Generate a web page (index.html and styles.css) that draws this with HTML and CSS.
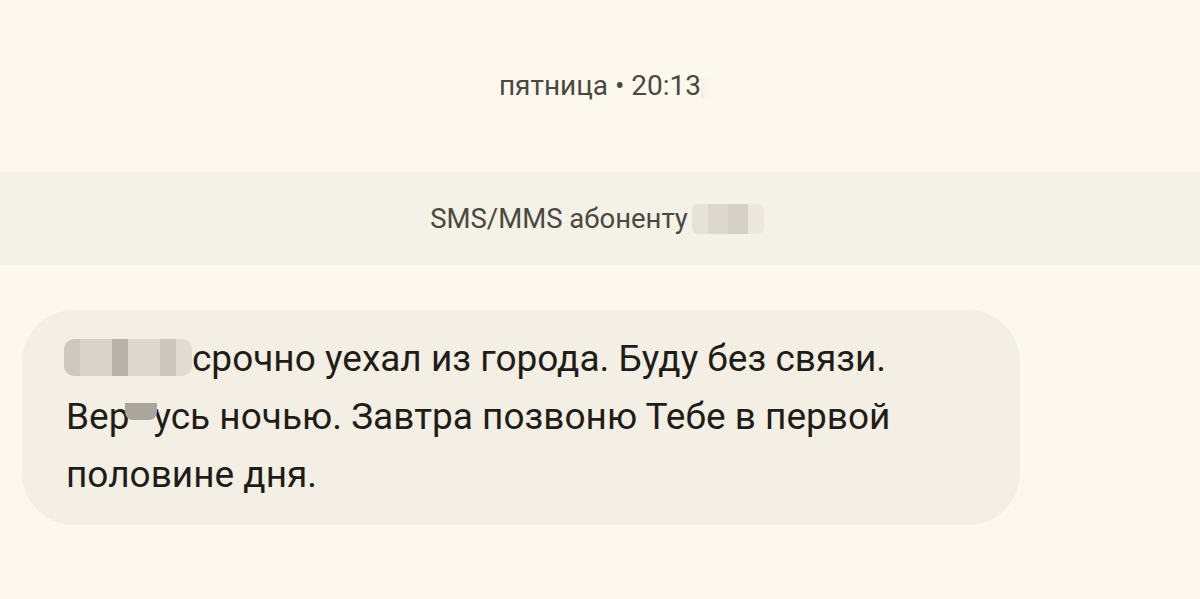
FILE: index.html
```html
<!DOCTYPE html>
<html lang="ru">
<head>
<meta charset="utf-8">
<link rel="stylesheet" href="styles.css">
</head>
<body>
<div class="screen">
  <div class="stamp">пятница • 20:13<span class="stamp-blur"></span></div>
  <div class="band"><span class="band-text">SMS/MMS абоненту<span class="mask mask-band"><i class="c1"></i><i class="c2"></i><i class="c3"></i><i class="c4"></i></span></span></div>
  <div class="thread">
    <div class="bubble">
      <p class="line"><span class="mask mask-name"><i class="n1"></i><i class="n2"></i><i class="n3"></i><i class="n4"></i><i class="n5"></i><i class="n6"></i></span>срочно уехал из города. Буду без связи.</p>
      <p class="line">Вер<span class="mask mask-small"></span>усь ночью. Завтра позвоню Тебе в первой</p>
      <p class="line">половине дня.</p>
    </div>
  </div>
</div>
</body>
</html>
```
FILE: styles.css
```css
html, body {
  margin: 0;
  padding: 0;
  background: #fcf8ee;
}
body {
  font-family: Roboto, "Noto Sans", sans-serif;
  color: #1f1d18;
  width: 1200px;
  height: 599px;
  overflow: hidden;
}
.screen {
  display: flex;
  flex-direction: column;
}
.stamp {
  margin-top: 69px;
  height: 34px;
  text-align: center;
  font-size: 28px;
  line-height: 34px;
  color: #4b4840;
  padding-left: 8px;
}
.stamp-blur {
  display: inline-block;
  width: 8px;
  height: 22px;
  vertical-align: middle;
  background: linear-gradient(90deg, #f3efe5, rgba(252,248,238,0));
}
.band {
  margin-top: 69px;
  height: 93px;
  background: #f4f1e7;
  display: flex;
  align-items: center;
  justify-content: center;
}
.band-text {
  font-size: 27.5px;
  color: #4b4840;
  display: inline-flex;
  align-items: center;
  margin-left: -6px;
}
.mask {
  display: inline-flex;
  vertical-align: middle;
}
.mask i {
  display: block;
}
.mask-band {
  width: 72px;
  height: 30px;
  margin-left: 4px;
  border-radius: 6px;
  overflow: hidden;
}
.mask-band .c1 { width: 16px; background: #e6e2d8; }
.mask-band .c2 { width: 20px; background: #dcd8ce; }
.mask-band .c3 { width: 20px; background: #d4d0c5; }
.mask-band .c4 { width: 16px; background: #ece8de; }
.thread {
  padding: 45px 180px 0 22px;
}
.bubble {
  background: #f4efe4;
  border-radius: 52px;
  padding: 20px 44px 21px 44px;
}
.line {
  margin: 0;
  font-size: 37px;
  line-height: 58px;
  color: #1f1d18;
  white-space: nowrap;
}
.mask-name {
  width: 128px;
  height: 37px;
  margin-right: 0;
  margin-left: -2px;
  border-radius: 10px;
  overflow: hidden;
  position: relative;
  top: -4px;
}
.mask-name .n1 { width: 16px; background: #cdc9bf; }
.mask-name .n2 { width: 32px; background: #d8d4ca; }
.mask-name .n3 { width: 16px; background: #b7b3a9; }
.mask-name .n4 { width: 32px; background: #dcd8ce; }
.mask-name .n5 { width: 16px; background: #cbc7bd; }
.mask-name .n6 { width: 16px; background: #e0dcd2; }
.mask-small {
  width: 32px;
  height: 17px;
  background: #aaa69d;
  border-radius: 0 0 8px 8px;
  position: relative;
  top: -8px;
  margin: 0 -4px 0 -4px;
}
```
